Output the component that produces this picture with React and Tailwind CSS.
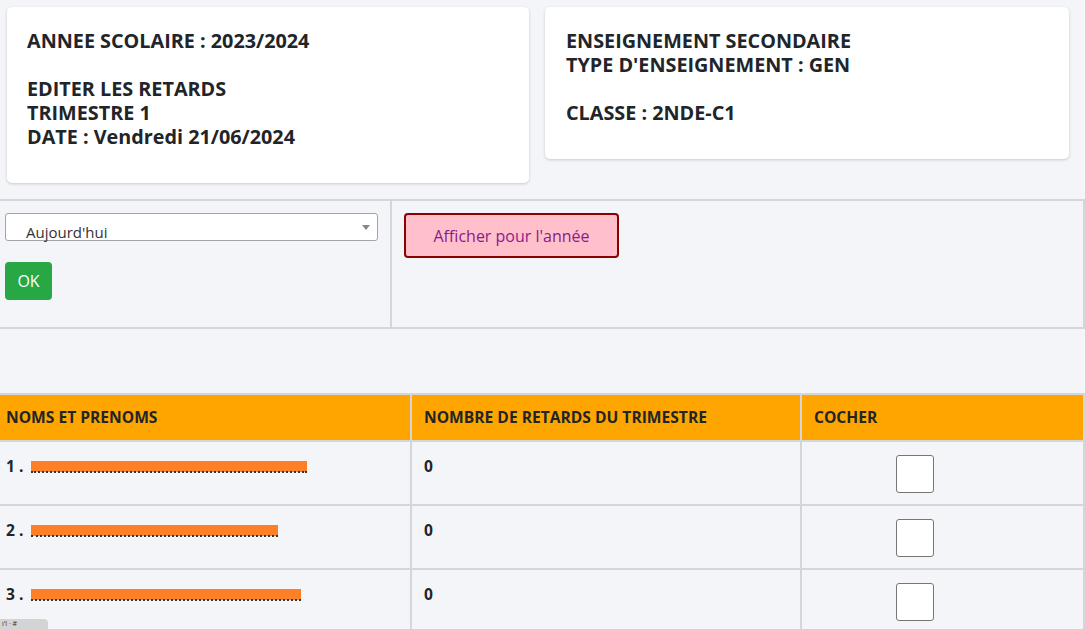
import React from 'react';

const rows = [
  { n: 1, w: 'w-[276px]' },
  { n: 2, w: 'w-[247px]' },
  { n: 3, w: 'w-[270px]' },
];

const App = () => {
  return (
    <div className="relative h-[629px] bg-[#f4f5f9] text-[#212529] font-['Open_Sans','Liberation_Sans',sans-serif] overflow-hidden">
      {/* Info cards */}
      <div className="flex items-start gap-4 px-[7px] pt-[7px] pb-4">
        <div className="w-[522px] rounded-[5px] bg-white shadow-[0_1px_3px_rgba(0,0,0,0.18)] pl-5 pt-[22px] pb-[34px] text-[19.8px] font-bold leading-6">
          <div>ANNEE SCOLAIRE : 2023/2024</div>
          <div className="mt-6">EDITER LES RETARDS</div>
          <div>TRIMESTRE 1</div>
          <div>DATE : Vendredi 21/06/2024</div>
        </div>
        <div className="w-[524px] rounded-[5px] bg-white shadow-[0_1px_3px_rgba(0,0,0,0.18)] pl-[21px] pt-[22px] pb-[34px] text-[19.8px] font-bold leading-6">
          <div>ENSEIGNEMENT SECONDAIRE</div>
          <div>TYPE D'ENSEIGNEMENT : GEN</div>
          <div className="mt-6">CLASSE : 2NDE-C1</div>
        </div>
      </div>

      {/* Filter */}
      <div className="flex w-[1085px] h-[130px] border-y-2 border-r-2 border-[#d5d6da]">
        <div className="w-[392px] border-r-2 border-[#d5d6da] pl-[5px] pt-[12px]">
          <div className="relative w-[373px] h-[28px] rounded-[3px] border border-[#a4a4a4] bg-white">
            <span className="absolute left-[20px] top-[8px] text-[15px] leading-5 text-[#333]">Aujourd'hui</span>
            <span className="absolute right-[7px] top-[11px] w-0 h-0 border-x-[4px] border-x-transparent border-t-[5px] border-t-[#888]"></span>
          </div>
          <button className="mt-[21px] w-[47px] h-[38px] rounded-[4px] bg-[#28a745] text-white text-[16px]">OK</button>
        </div>
        <div className="flex-1 pl-3 pt-[12px]">
          <button className="w-[215px] h-[45px] rounded-[4px] border-2 border-[#8b0000] bg-[#ffc0cb] text-[#8a1a8a] text-[16px]">
            Afficher pour l'année
          </button>
        </div>
      </div>

      {/* Table */}
      <table className="mt-[64px] w-[1085px] border-collapse text-[15.6px]">
        <thead>
          <tr className="bg-[#ffa500] h-[47px]">
            <th className="w-[411px] border-2 border-l-0 border-[#d5d6da] pl-[6px] text-left font-bold">NOMS ET PRENOMS</th>
            <th className="w-[390px] border-2 border-[#d5d6da] pl-[12px] text-left font-bold">NOMBRE DE RETARDS DU TRIMESTRE</th>
            <th className="border-2 border-[#d5d6da] pl-[12px] text-left font-bold">COCHER</th>
          </tr>
        </thead>
        <tbody>
          {rows.map(r => (
            <tr key={r.n} className="h-[64px]">
              <td className="border-2 border-l-0 border-[#d5d6da] pl-[6px] pt-[13px] align-top font-bold">
                <div className="flex items-center">
                  <span className="w-[25px]">{r.n} .</span>
                  <span className="relative inline-block">
                    <span className={`block ${r.w} h-[11px] bg-[#ff7f27]`}></span>
                    <span className="block h-[2px] w-full border-b-2 border-dotted border-[#333] -mt-[1px]"></span>
                  </span>
                </div>
              </td>
              <td className="border-2 border-[#d5d6da] pl-[12px] pt-[13px] align-top font-bold">0</td>
              <td className="border-2 border-[#d5d6da] pl-[94px] pt-[13px] align-top">
                <div className="w-[38px] h-[38px] rounded-[3px] border border-[#767676] bg-white"></div>
              </td>
            </tr>
          ))}
        </tbody>
      </table>

      <div className="absolute left-0 bottom-0 w-[48px] h-[10px] rounded-tr-[4px] bg-[#d4d4d4] text-[7px] leading-[10px] text-[#333] pl-[2px]">
        ı'l · #
      </div>
    </div>
  );
};

export default App;
